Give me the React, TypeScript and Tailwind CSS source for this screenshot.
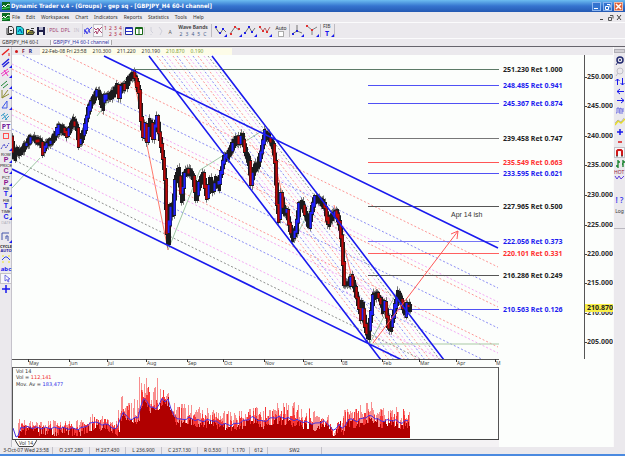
import type { ReactNode } from "react";

type Point = [number, number];

function createRandom(seed: number) {
  let state = seed;
  return () => {
    state = (state * 1664525 + 1013904223) % 4294967296;
    return state / 4294967296;
  };
}

function valueAt(points: Point[], x: number) {
  for (let i = 1; i < points.length; i++) {
    const [x0, y0] = points[i - 1];
    const [x1, y1] = points[i];
    if (x <= x1) return x1 === x0 ? y1 : y0 + ((y1 - y0) * (x - x0)) / (x1 - x0);
  }
  return points[points.length - 1][1];
}

const BLUE = "#1c1cf0";
const RED = "#ff3030";
const BLACK = "#222222";
const PINK = "#ee55ee";

const price: Point[] = [
  [12, 144], [14, 157], [16, 150], [20, 153], [25, 146], [30, 139], [36, 140], [41, 142], [43, 152], [46, 144],
  [52, 140], [56, 133], [59, 127], [63, 130], [67, 134], [70, 127], [74, 121], [77, 128], [79, 144], [82, 138],
  [85, 127], [88, 110], [92, 101], [97, 92], [100, 97], [102, 107], [104, 98], [109, 97], [113, 93], [117, 86],
  [119, 96], [121, 87], [126, 87], [128, 79], [133, 74], [136, 80], [139, 92], [141, 120], [143, 137], [145, 125],
  [147, 142], [150, 121], [153, 136], [157, 117], [160, 140], [163, 158], [165, 180], [167, 232], [168, 242],
  [170, 205], [173, 213], [175, 180], [178, 171], [182, 200], [184, 174], [188, 170], [193, 177], [196, 198],
  [199, 184], [203, 174], [207, 198], [210, 180], [213, 190], [216, 180], [218, 187], [221, 172], [224, 158],
  [228, 155], [232, 146], [236, 138], [239, 142], [242, 136], [245, 150], [249, 163], [251, 182], [254, 168],
  [258, 165], [262, 147], [265, 133], [269, 138], [273, 145], [275, 162], [277, 205], [279, 219], [281, 194],
  [284, 213], [287, 212], [290, 228], [293, 238], [296, 230], [299, 205], [302, 203], [305, 213], [309, 226],
  [312, 208], [315, 198], [322, 202], [325, 208], [328, 224], [331, 218], [336, 211], [339, 222], [342, 245],
  [344, 283], [349, 284], [351, 277], [355, 289], [358, 303], [361, 318], [362, 303], [365, 325], [368, 337],
  [370, 320], [373, 296], [377, 294], [380, 300], [383, 310], [385, 303], [388, 325], [390, 330], [393, 318],
  [395, 306], [398, 294], [401, 300], [405, 314], [407, 305], [410, 308],
];

function buildCandles() {
  const random = createRandom(17);
  let wicks = "";
  let shell = "";
  let rising = "";
  let falling = "";
  for (let x = 12; x <= 410; x += 1) {
    const open = valueAt(price, x - 1);
    const close = valueAt(price, x + 1);
    const top = Math.min(open, close) - 1 - Math.round(random() * 3);
    const bottom = Math.max(open, close) + 1 + Math.round(random() * 3);
    wicks += `M${x + 0.5} ${top - 1 - random() * 3}V${bottom + 1 + random() * 3}`;
    shell += `M${x + 0.5} ${top}V${bottom}`;
    if (x % 2 === 0 && (Math.abs(close - open) > 7 || random() > 0.62)) {
      const body = `M${x + 0.5} ${top + 1}V${bottom - 1}`;
      if (close < open) rising += body;
      else falling += body;
    }
  }
  return { wicks, shell, rising, falling };
}

const candles = buildCandles();

const shallow = [
  [82, RED], [103, BLUE], [117, PINK], [122, RED], [143, BLUE],
  [162, RED], [168, PINK], [182, BLUE], [202, PINK], [212, BLACK],
] as [number, string][];

const steep = [
  [157, RED], [162, BLUE], [167, PINK], [173, RED], [177, BLUE], [184, RED],
  [188, PINK], [193, BLUE], [198, RED], [204, PINK], [208, BLACK],
] as [number, string][];

const levels = [
  { y: 70, x: 132, label: "251.230 Ret 1.000", color: BLACK, line: "#5c7a66" },
  { y: 86, x: 368, label: "248.485 Ret 0.941", color: BLUE, line: "#5050f5" },
  { y: 104, x: 368, label: "245.367 Ret 0.874", color: BLUE, line: "#5050f5" },
  { y: 139, x: 368, label: "239.458 Ret 0.747", color: BLACK, line: "#777777" },
  { y: 163, x: 368, label: "235.549 Ret 0.663", color: RED, line: "#ff5555" },
  { y: 174, x: 368, label: "233.595 Ret 0.621", color: BLUE, line: "#5050f5" },
  { y: 207, x: 368, label: "227.965 Ret 0.500", color: BLACK, line: "#555555" },
  { y: 242, x: 368, label: "222.056 Ret 0.373", color: BLUE, line: "#7575f5" },
  { y: 254, x: 368, label: "220.101 Ret 0.331", color: RED, line: "#ff6060" },
  { y: 276, x: 368, label: "216.286 Ret 0.249", color: BLACK, line: "#555555" },
  { y: 310, x: 386, label: "210.563 Ret 0.126", color: BLUE, line: "#5050f5" },
];

const priceTicks: [string, number][] = [
  ["250.000", 77], ["245.000", 106], ["240.000", 136], ["235.000", 165], ["230.000", 195],
  ["225.000", 225], ["220.000", 254], ["215.000", 283], ["210.000", 313], ["205.000", 342],
];

const months: [string, number][] = [
  ["May", 28], ["Jun", 69], ["Jul", 107], ["Aug", 146], ["Sep", 187], ["Oct", 223],
  ["Nov", 264], ["Dec", 303], ["08", 341], ["Feb", 382], ["Mar", 419], ["Apr", 456], ["M", 495],
];

function PriceChart() {
  return (
    <svg viewBox="12 55 601 312" className="block w-full" role="img" aria-label="GBPJPY H4 price chart">
      <clipPath id="plot">
        <rect x="12" y="55" width="487" height="304" />
      </clipPath>
      <g clipPath="url(#plot)" fill="none">
        <g strokeWidth="1" strokeDasharray="2 2" opacity="0.5">
          {shallow.map(([y, color]) => (
            <path key={y} d={`M12 ${y - 53}L498 ${y + 185}`} stroke={color} />
          ))}
          {steep.map(([x, color]) => (
            <path key={x} d={`M${x} 56L${x + 232} 360`} stroke={color} />
          ))}
        </g>
        {levels.map((level) => (
          <path key={level.y} d={`M${level.x} ${level.y - 0.5}H500`} stroke={level.line} />
        ))}
        <path d="M370 344H500" stroke="#a8c8a4" />
        <path d="M12 188L40 158M97 116L132 71M168 250L200 170L265 129M293 243L317 195M370 343L397 292" stroke="#5f9f6a" strokeWidth="0.6" />
        <path d="M132 70L168 250M267 130L293 240M334 205L368 343" stroke="#ff5a4a" strokeWidth="0.8" />
        <path d={candles.wicks} stroke="#777" strokeWidth="1" />
        <path d={candles.shell} stroke="#1b1b1e" strokeWidth="3" />
        <path d={candles.rising} stroke="#2020ff" strokeWidth="2" />
        <path d={candles.falling} stroke="#c00808" strokeWidth="2" />
        <path d="M104 56L498 248M12 169L402 360M149 56L381 360M212 56L444 360" stroke="#1a1aee" strokeWidth="1.6" />
        <path d="M373 343L458 231M451 234L458 231L457 239" stroke="#ff5858" strokeWidth="1" />
      </g>
      <text x="451" y="217" fontSize="7" fill="#333" className="font-['Liberation_Sans',sans-serif]">Apr 14 ish</text>
      <g fontSize="7" fontWeight="700">
        {levels.map((level) => (
          <text key={level.y} x="503" y={level.y + 2} fill={level.color}>{level.label}</text>
        ))}
        {priceTicks.map(([label, y]) => (
          <g key={label}>
            <path d={`M584 ${y + 0.5}h3`} stroke="#444" />
            <text x="587" y={y + 2} fill="#333">{label}</text>
          </g>
        ))}
        <rect x="585" y="304" width="28" height="8" fill="#f8f048" />
        <text x="587" y="310" fill="#222">210.870</text>
      </g>
      <path d="M584.5 55V359" stroke="#555" />
      <path d="M12 359.5H499" stroke="#555" />
      {months.map(([label, x]) => (
        <g key={label}>
          <path d={`M${x + 0.5} 359v3`} stroke="#333" />
          <text x={x + 1} y="365" fontSize="5" fill="#444">{label}</text>
        </g>
      ))}
    </svg>
  );
}

const average: Point[] = [
  [18, 437], [20, 427], [40, 428], [60, 428], [80, 429], [90, 424], [96, 421], [101, 426], [105, 423], [110, 427],
  [118, 429], [122, 410], [128, 419], [138, 418], [142, 400], [146, 399], [148, 404], [152, 408], [156, 409],
  [160, 402], [163, 398], [165, 402], [168, 398], [172, 414], [180, 420], [189, 418], [200, 421], [212, 420],
  [221, 424], [232, 425], [244, 421], [253, 417], [262, 422], [275, 417], [286, 418], [300, 421], [315, 424],
  [323, 421], [331, 426], [334, 434], [337, 426], [340, 422], [343, 433], [347, 419], [358, 421], [365, 417],
  [372, 416], [380, 421], [395, 420], [400, 423], [410, 420],
];

const peaks: Point[] = [
  [18, 419], [60, 420], [86, 420], [93, 410], [97, 418], [104, 408], [108, 420], [117, 420], [120, 388], [128, 402],
  [136, 398], [138, 380], [140, 366], [142, 367], [144, 382], [148, 374], [152, 394], [157, 372], [162, 380], [166, 380],
  [171, 400], [182, 403], [200, 406], [221, 410], [242, 406], [252, 407], [272, 402], [290, 400], [306, 406],
  [328, 413], [332, 434], [335, 430], [337, 416], [341, 434], [343, 404], [350, 408], [370, 400], [380, 409],
  [402, 402], [410, 410],
];

function buildVolume() {
  const random = createRandom(91);
  let pale = "";
  let bright = "";
  let dark = "";
  for (let x = 18; x <= 409; x++) {
    const mean = valueAt(average, x);
    const top = valueAt(peaks, x);
    const reach = top + (mean - top) * random() * 0.9;
    const step = `M${x + 0.5} 438V`;
    if (random() > 0.3) pale += step + Math.round(reach);
    if (random() > 0.4) bright += step + Math.round(mean + (reach - mean) * random());
    dark += step + Math.round(Math.min(436, mean - 1 + random() * 9));
  }
  return { pale, bright, dark };
}

const volume = buildVolume();

function VolumeChart() {
  const line = Array.from({ length: 131 }, (_, i) => {
    const x = 18 + i * 3;
    return `${x},${valueAt(average, x) + ((i * 7) % 3) - 1}`;
  }).join(" ");
  return (
    <svg viewBox="12 367 601 73" className="block w-full" role="img" aria-label="Volume chart">
      <path d={volume.pale} stroke="#f88e8e" />
      <path d={volume.bright} stroke="#f63636" />
      <path d={volume.dark} stroke="#b00000" />
      <polyline points={`13,428 16,437 ${line}`} fill="none" stroke="#4a30e0" strokeWidth="1" />
      <path d="M12 367.5H499" stroke="#666" />
      <path d="M498.5 367V440M12.5 367V440" stroke="#555" />
      <path d="M12 439.5H499" stroke="#444" strokeWidth="1" />
      <g fontSize="5" fill="#333" className="font-['DejaVu_Sans',sans-serif]">
        <text x="16" y="373">Vol 14</text>
        <text x="16" y="379">Vol = <tspan fill="#f03030">112,141</tspan></text>
        <text x="16" y="386">Mov. Av = <tspan fill="#3030e8">183,477</tspan></text>
      </g>
    </svg>
  );
}

type ToolProps = { label: string; className?: string; pressed?: boolean; children: ReactNode };

function Tool({ label, className = "", pressed = false, children }: ToolProps) {
  return (
    <button
      type="button"
      aria-label={label}
      className={`flex shrink-0 items-center justify-center leading-none ${pressed ? "border border-[#c4c2c8] bg-[#f8f8fa]" : ""} ${className}`}
    >
      {children}
    </button>
  );
}

function Glyph({ w = 10, h = 10, children }: { w?: number; h?: number; children: ReactNode }) {
  return (
    <svg width={w} height={h} viewBox={`0 0 ${w} ${h}`} fill="none" className="block shrink-0" aria-hidden="true">
      {children}
    </svg>
  );
}

function TitleIcon() {
  return (
    <Glyph w={8} h={8}>
      <rect width="8" height="8" fill="#0b6b22" />
      <path d="M0 5L2 3L3 5L6 2L8 3" stroke="#ffffff" />
      <path d="M0 6.500L4 6L8 5" stroke="#45e05d" />
    </Glyph>
  );
}

function WindowControls() {
  return (
    <div className="flex gap-0.5">
      <button type="button" aria-label="Minimize" className="border border-[#8db6ee] bg-[#3473cf]">
        <Glyph w={7} h={7}><path d="M1 5.500H5" stroke="#fff" /></Glyph>
      </button>
      <button type="button" aria-label="Restore" className="border border-[#8db6ee] bg-[#3473cf]">
        <Glyph w={7} h={7}><path d="M1.500 3.500H4.500V6.500H1.500ZM3 1.500H6V4.500" stroke="#fff" /></Glyph>
      </button>
      <button type="button" aria-label="Close" className="border border-[#f0b9a4] bg-[#df5f37]">
        <Glyph w={7} h={7}><path d="M1 1L6 6M6 1L1 6" stroke="#fff" strokeWidth="1.5" /></Glyph>
      </button>
    </div>
  );
}

function Zigzag({ d, line, dots, label }: { d: string; line: string; dots: Point[]; label: string }) {
  return (
    <Tool label={label} className="w-[15px]">
      <Glyph w={13} h={13}>
        <path d={d} stroke={line} strokeWidth="0.8" />
        {dots.map(([x, y]) => <rect key={`${x}-${y}`} x={x - 1} y={y - 1} width="2" height="2" fill={label.includes("red") ? "#e03030" : "#2020e0"} />)}
        <path d="M13 10V13H10Z" fill="#1818ee" />
      </Glyph>
    </Tool>
  );
}

function TopToolbar() {
  return (
    <div role="toolbar" aria-label="Main" className="flex h-[17px] items-center border-y border-[#fbfbfc]">
      <div className="flex items-center pl-[5px]">
        <Tool label="New" className="w-[10px]">
          <Glyph w={8} h={9}><path d="M2.500.500H6L7.500 2.500V7.500H2.500ZM1 2V8.500H6M4 4.500H6" stroke="#333" /></Glyph>
        </Tool>
        <Tool label="Copy" className="w-[10px]">
          <Glyph w={8} h={9}><path d="M.500.500H5L7.500 3V8.500H.500Z" fill="#20d8e0" stroke="#17555d" /><path d="M2 6L4 3L6 7" stroke="#073b9e" /></Glyph>
        </Tool>
        <Tool label="Open" className="w-[10px]">
          <Glyph w={9} h={8}><path d="M.500 7.500V2.500H3L4 3.500H7V7.500Z" fill="#f2e850" stroke="#333" /><path d="M1 7.500L3 5H8.500L7 7.500Z" fill="#84843a" stroke="#333" /><path d="M5 1.500H8" stroke="#333" /></Glyph>
        </Tool>
        <Tool label="Save" className="w-[12px]">
          <Glyph w={8} h={8}><rect width="8" height="8" fill="#20204a" /><rect x="2" y="0" width="4" height="3" fill="#b8b8d0" /><rect x="2" y="5" width="4" height="3" fill="#eee" /></Glyph>
        </Tool>
      </div>
      <div className="flex items-center border-l border-[#d4d2d8] text-[5px] text-[#a04070]">
        <Tool label="PDL" className="w-[12px]">PDL</Tool>
        <Tool label="DPL" className="w-[11px]">DPL</Tool>
        <Tool label="IN" className="w-[11px] text-[#c6c0cc]">IN</Tool>
      </div>
      <div className="flex items-center border-l border-[#d4d2d8]">
        <Tool label="Blue wave" className="w-[10px]">
          <Glyph w={8} h={9}><path d="M0 3L1 6L2 3L4 2L5 4L8 1M0 8L2 5L3 8L5 4L6 7" stroke="#2222e5" strokeWidth="0.8" /></Glyph>
        </Tool>
        <Tool label="Red wave" pressed className="h-[13px] w-[10px]">
          <Glyph w={8} h={9}><path d="M0 2L2 4L4 2L5 4L8 1M0 7L2 5L3 8L5 4L8 7" stroke="#9c2050" strokeWidth="0.8" /></Glyph>
        </Tool>
      </div>
      <div className="grid w-[20px] grid-cols-4 text-center text-[5px] leading-[6px] text-[#b01840]">
        <span>1</span><span>2</span><span>3</span><span>4</span>
        <span /><span>2</span><span>3</span><span>4</span>
      </div>
      <div className="flex items-center border-x border-[#d4d2d8]">
        <Tool label="Split rows" className="w-[10px]">
          <Glyph w={8} h={8}><path d="M.500.500H7.500V7.500H.500Z" fill="#fff" stroke="#2530a0" /><path d="M1 1.500H7M1 4.500H7" stroke="#2530d0" /></Glyph>
        </Tool>
        <Tool label="Split columns" className="w-[10px]">
          <Glyph w={8} h={8}><path d="M.500.500H7.500V7.500H.500Z" fill="#fff" stroke="#176817" /><path d="M4 .500V7.500M1 1.500H7" stroke="#176817" /></Glyph>
        </Tool>
      </div>
      <div className="flex items-center pl-px text-[5px]">
        <Tool label="Previous wave" className="w-[10px]"><Glyph><path d="M5 1V5L7 7M5 8V9" stroke="#d0d0da" /></Glyph></Tool>
        <Tool label="Next wave" className="w-[10px]"><Glyph><path d="M3 1L6 5L4 9" stroke="#d0d0da" /></Glyph></Tool>
        <Tool label="Wave A" className="w-[8px] pt-1 text-[#555]">A</Tool>
      </div>
      <div className="ml-0.5 w-[34px] text-center text-[5px] leading-[7px] text-[#333]">
        <div className="whitespace-nowrap font-semibold">Wave Bands</div>
        <div className="flex justify-around px-0.5 text-[#46608c]">
          <span>2</span><span>3</span><span>4</span><span>5</span><span>C</span>
        </div>
      </div>
      <div className="ml-px flex items-center border-l border-[#bdbbc2] pl-px">
        <Zigzag label="Down swing" d="M1 3L6 10L9 5L12 8" line="#555" dots={[[2, 3], [6, 9], [9, 5]]} />
        <Zigzag label="Up swing red" d="M1 10L6 3L10 6" line="#555" dots={[[2, 10], [6, 3], [10, 5]]} />
        <Zigzag label="Double swing" d="M1 9L5 3L8 8L11 4" line="#555" dots={[[1, 9], [5, 3], [8, 8]]} />
        <Zigzag label="Triple swing red" d="M0 2L4 7L6 4L8 8L11 3" line="#a44" dots={[[1, 3], [4, 7], [8, 8]]} />
        <label className="ml-px flex w-[14px] flex-col items-center text-[5px] leading-[6px] text-[#222]">
          Auto
          <input type="checkbox" className="size-[6px] appearance-none border border-[#aaa] bg-white" />
        </label>
      </div>
      <div className="ml-px flex items-center border-x border-[#bdbbc2]">
        <Zigzag label="Pivot up" d="M1 10L6 7V1M6 7L11 9" line="#555" dots={[[2, 10], [6, 7]]} />
        <Zigzag label="Pivot down red" d="M1 2L6 6V11M6 6L11 3" line="#666" dots={[[1, 2], [6, 6]]} />
        <Tool label="FIB T" className="w-[14px] border-l border-[#bdbbc2]">
          <Glyph w={12} h={13}>
            <text x="1" y="4" fontSize="5" fill="#333">FIB</text>
            <text x="3" y="12" fontSize="7" fontWeight="700" fill="#1818ee">T</text>
            <path d="M12 10V13H9Z" fill="#1818ee" />
          </Glyph>
        </Tool>
      </div>
    </div>
  );
}

function TextTool({ top, letter, color, height }: { top: string; letter: string; color: string; height: string }) {
  return (
    <Tool label={`${top} ${letter}`} className={height}>
      <svg width="12" height="11" viewBox="0 0 12 11" className="block shrink-0 font-['Liberation_Sans',sans-serif]" aria-hidden="true">
        <text x="6" y="4" fontSize="4" textAnchor="middle" fill="#111">{top}</text>
        <text x="6" y="10" fontSize="7" fontWeight="700" textAnchor="middle" fill={color}>{letter}</text>
        <path d="M12 8V11H9Z" fill="#1818ee" />
      </svg>
    </Tool>
  );
}

const corner = <path d="M12 7V10H9Z" fill="#1818ee" />;

function DrawingToolbar() {
  return (
    <div role="toolbar" aria-label="Drawing" aria-orientation="vertical" className="flex w-3 shrink-0 flex-col border-r border-[#c5c3cb] [&>button]:w-3">
      <Tool label="Trend line" className="h-[10px]"><Glyph w={12}><path d="M2 8L9 2" stroke="#e82020" strokeWidth="1.500" /><path d="M9 6V9" stroke="#e82020" /></Glyph></Tool>
      <Tool label="Parallel lines" className="h-[11px]"><Glyph w={12}><path d="M2 7L9 1M3 9L9 4" stroke="#2020dd" strokeWidth="1.500" />{corner}</Glyph></Tool>
      <Tool label="Channel" className="h-[10px]"><Glyph w={12}><path d="M1 6L8 1M2 8L9 3M4 2L8 8" stroke="#ee30c0" />{corner}</Glyph></Tool>
      <Tool label="Regression" className="h-[11px]"><Glyph w={12}><path d="M1 7L7 2M3 9L8 5" stroke="#208838" />{corner}</Glyph></Tool>
      <Tool label="Gann fan" className="h-[10px]"><Glyph w={12}><path d="M2 1V9L8 1M2 9L9 5" stroke="#8c8c30" />{corner}</Glyph></Tool>
      <Tool label="Angle" className="h-[11px]"><Glyph w={12}><path d="M2 8L7 1V8H2" stroke="#4058e8" />{corner}</Glyph></Tool>
      <Tool label="Pitchfork" className="h-[11px]"><Glyph w={12}><path d="M1 5L5 2M2 8L8 3M5 9L9 5M3 3L7 9" stroke="#389cc8" /></Glyph></Tool>
      <Tool label="Price and time" pressed className="h-[10px] text-[7px] font-bold text-[#74209c]">PT</Tool>
      <Tool label="Rectangle" className="h-[10px]"><Glyph w={12}><rect x="3.500" y="2.500" width="5" height="5" stroke="#ff5050" /></Glyph></Tool>
      <Tool label="Wave labels" className="h-[10px]"><Glyph w={12}><path d="M1 8L4 3L6 7L9 2" stroke="#4040cc" strokeDasharray="2 1" />{corner}</Glyph></Tool>
      <TextTool top="ROW" letter="P" color="#8c1490" height="h-[12px]" />
      <TextTool top="PRICE" letter="C" color="#8c1490" height="h-[11px]" />
      <TextTool top="PCT" letter="P" color="#8c1490" height="h-[12px]" />
      <TextTool top="FIB" letter="T" color="#1818ee" height="h-[11px]" />
      <TextTool top="FIB" letter="T" color="#1818ee" height="h-[12px]" />
      <TextTool top="TIME" letter="C" color="#1818ee" height="h-[11px]" />
      <Tool label="Date" className="h-[6px] text-[4px] text-[#b0b0bc]">DATE</Tool>
      <Tool label="Projection" className="mt-1 h-[14px]"><Glyph w={12} h={12}><path d="M2 9V2H9M6 5V8M6 5H8V10" stroke="#4456aa" /><path d="M12 9V12H9Z" fill="#1818ee" /></Glyph></Tool>
      <Tool label="Cycle auto" className="h-[9px] flex-col text-[4px] font-bold">
        <span className="text-[#222]">CYCLE</span>
        <span className="text-[#2020a0]">AUTO</span>
      </Tool>
      <Tool label="Arc" className="h-[11px]"><Glyph w={12}><path d="M2 6L5 3H7L10 6" stroke="#3048e0" /><path d="M2 2H4M8 2H10M2 8H4M8 8H10" stroke="#eee820" /></Glyph></Tool>
      <Tool label="Text" className="h-[9px] text-[6px] font-bold text-[#1818ee]">abc</Tool>
      <Tool label="Pointer" pressed className="h-[11px]"><Glyph w={9} h={9}><path d="M3 1V7L5 5.500L6 8L7 7.500L6 5H8Z" stroke="#5050e0" strokeWidth="0.800" /></Glyph></Tool>
      <Tool label="Crosshair" className="h-[10px]"><Glyph w={12}><path d="M6 1V9M2 5H10" stroke="#1818ee" strokeWidth="1.500" /></Glyph></Tool>
    </div>
  );
}

function ViewToolbar() {
  return (
    <div role="toolbar" aria-label="View" aria-orientation="vertical" className="flex w-3 shrink-0 flex-col border-l border-[#fafafa] bg-[#ebe9ed] pt-0.5 [&>button]:w-[11px]">
      <div className="mb-0.5 h-1 border border-[#b0aeb5] bg-[#d0ced4]" />
      <Tool label="Zoom in" className="h-[11px]"><Glyph><circle cx="5" cy="4" r="3" stroke="#222a70" strokeWidth="1.500" /><path d="M3 6L1 9M4 4H6M5 3V5" stroke="#222a70" /></Glyph></Tool>
      <Tool label="Zoom out" className="h-[11px]"><Glyph><circle cx="5" cy="4" r="3" stroke="#c0c0c8" /><path d="M3 6L1 9" stroke="#c0c0c8" /></Glyph></Tool>
      <Tool label="Scale" className="h-[10px]"><Glyph><path d="M2.500 8V2M.500 4L2.500 2L4.500 4M7.500 1V8M5.500 6L7.500 8L9.500 6" stroke="#1818ee" /></Glyph></Tool>
      <Tool label="Scroll left" className="h-[9px]"><Glyph h={9}><path d="M9 4.500H2M5 2L2 4.500L5 7" stroke="#1818ee" /></Glyph></Tool>
      <Tool label="Scroll right" className="h-[10px]"><Glyph><path d="M2 4.500H9M6 2L9 4.500L6 7" stroke="#1818ee" /></Glyph></Tool>
      <Tool label="Bars" className="h-[10px]"><Glyph><path d="M1 7H2V2H4V7M5 8V2L7 3V8M8 2V6" stroke="#5454e0" strokeWidth="0.8" /></Glyph></Tool>
      <Tool label="Line style" className="h-[11px]"><Glyph><path d="M0 8L3 4L6 6L10 2" stroke="#e6dd28" strokeWidth="1.500" /><path d="M0 6L3 3L6 5L9 1" stroke="#889" strokeWidth="0.500" /></Glyph></Tool>
      <Tool label="Increase" className="h-[10px]"><Glyph><path d="M5 2V8M2 5H8" stroke="#1818ee" strokeWidth="1.500" /></Glyph></Tool>
      <Tool label="Decrease" className="h-[10px]"><Glyph><path d="M3 5H7" stroke="#dd1515" strokeWidth="1.500" /></Glyph></Tool>
      <Tool label="Magnet" pressed className="h-[11px]"><Glyph w={9} h={9}><path d="M2 8V3L3 2H6L7 3V8" stroke="#d01818" strokeWidth="2" /><path d="M1 8H3M6 8H8" stroke="#444" /></Glyph></Tool>
      <Tool label="Bar type" className="h-[11px]"><Glyph><path d="M3 1V9M1 7H3M3 3H5M8 1V8M7 5H8M8 3H10" stroke="#128028" strokeWidth="1.300" /></Glyph></Tool>
      <Tool label="Hot" className="h-[12px]"><Glyph w={11} h={12}><text x="0" y="5" fontSize="5" fill="#922040">HOT</text><path d="M1 7L3 10L5 7L7 10L10 7" stroke="#6040dd" /></Glyph></Tool>
      <Tool label="Help" className="mt-[13px] h-[12px] text-[8px] font-semibold text-[#4040ee]">!&nbsp;?</Tool>
      <Tool label="Log" className="h-[10px] text-[5px] text-[#333]">Log</Tool>
      <div className="mt-3 border-t border-[#bab8c0]" />
    </div>
  );
}

const menus = ["File", "Edit", "Workspaces", "Chart", "Indicators", "Reports", "Statistics", "Tools", "Help"];

const status: [string, string][] = [
  ["3-Oct-07 Wed 23:58", "w-[53px]"], ["O 237.280", "w-[37px]"], ["H 237.430", "w-[36px]"], ["L 236.900", "w-[36px]"],
  ["C 237.130", "w-[36px]"], ["R 0.530", "w-[30px]"], ["1.170", "w-[22px]"], ["612", "w-[18px]"], ["SW2", "w-[54px]"],
];

export default function App() {
  return (
    <div className="flex min-h-screen flex-col overflow-hidden bg-[#ebe9ed] font-['Noto_Sans','Open_Sans',sans-serif] text-[5px] text-[#333]">
      <header className="flex h-3 items-center justify-between bg-gradient-to-b from-[#6dbcf0] via-[#3674cf] to-[#2459b3] px-0.5">
        <div className="flex items-center gap-px">
          <TitleIcon />
          <h1 className="font-['DejaVu_Sans_Condensed','DejaVu_Sans',sans-serif] text-[6px] font-bold leading-none text-white">Dynamic Trader v.4 - (Groups) - gep sq - [GBPJPY_H4 60-I channel]</h1>
        </div>
        <WindowControls />
      </header>
      <nav aria-label="Menu" className="flex h-[10px] items-center justify-between px-0.5">
        <div className="flex items-center gap-[6px]">
          <div className="-mr-1"><TitleIcon /></div>
          {menus.map((menu) => <button key={menu} type="button" className="leading-none">{menu}</button>)}
        </div>
        <div className="flex gap-0.5">
          <button type="button" aria-label="Minimize chart"><Glyph w={7} h={7}><path d="M2 5.500H5" stroke="#444" /></Glyph></button>
          <button type="button" aria-label="Restore chart"><Glyph w={7} h={7}><path d="M1.500 3.500H4.500V6.500H1.500ZM3 1.500H6V4.500" stroke="#555" /></Glyph></button>
          <button type="button" aria-label="Close chart"><Glyph w={7} h={7}><path d="M1 1L5 6M5 1L1 6" stroke="#444" /></Glyph></button>
        </div>
      </nav>
      <TopToolbar />
      <div role="tablist" className="flex h-2 items-center gap-2 border-b border-[#66646c] pl-0.5">
        <button type="button" role="tab" aria-selected="false" className="w-10 text-left leading-none">GBPJPY_H4 60-I</button>
        <button type="button" role="tab" aria-selected="true" className="border-x border-[#aaa] bg-[#f6f6fa] px-0.5 leading-none text-[#3434a0]">GBPJPY_H4 60-I channel</button>
      </div>
      <main className="flex flex-1">
        <DrawingToolbar />
        <section className="flex min-w-0 flex-1 flex-col bg-[#fcfefc]">
          <div className="flex h-2 items-center bg-[#ebe9ed] leading-none">
            <span className="ml-[3px] size-[3px] rounded-full bg-[#d01818]" />
            <span className="ml-1 font-bold text-[#801030]">F</span>
            <span className="ml-1 font-bold text-[#202080]">R</span>
            <div className="ml-2 flex h-[7px] w-[192px] items-center gap-[6px] bg-[#fdfce8] pl-0.5">
              <span>22-Feb-08 Fri 23:58</span>
              <span>210.300</span>
              <span>211.220</span>
              <span>210.190</span>
              <span className="text-[#7c9c38]">210.870</span>
              <span className="text-[#7c9c38]">0.190</span>
            </div>
          </div>
          <PriceChart />
          <VolumeChart />
          <div className="flex flex-1">
            <div className="w-[81%] bg-[#f4f2f4]">
              <Tool label="Vol 14" className="ml-[3px]">
                <Glyph w={22} h={7}>
                  <path d="M0 0L4 6.500H18L22 0" fill="#fff" stroke="#444" />
                  <text x="11" y="5" fontSize="5" textAnchor="middle" fill="#333">Vol 14</text>
                </Glyph>
              </Tool>
            </div>
          </div>
        </section>
        <ViewToolbar />
      </main>
      <footer className="flex h-[9px] items-stretch border-b-2 border-[#4a8ae0] leading-[7px]">
        {status.map(([text, width]) => (
          <span key={text} className={`${width} shrink-0 whitespace-nowrap border-r border-[#c2c0c8] text-center`}>{text}</span>
        ))}
      </footer>
    </div>
  );
}
